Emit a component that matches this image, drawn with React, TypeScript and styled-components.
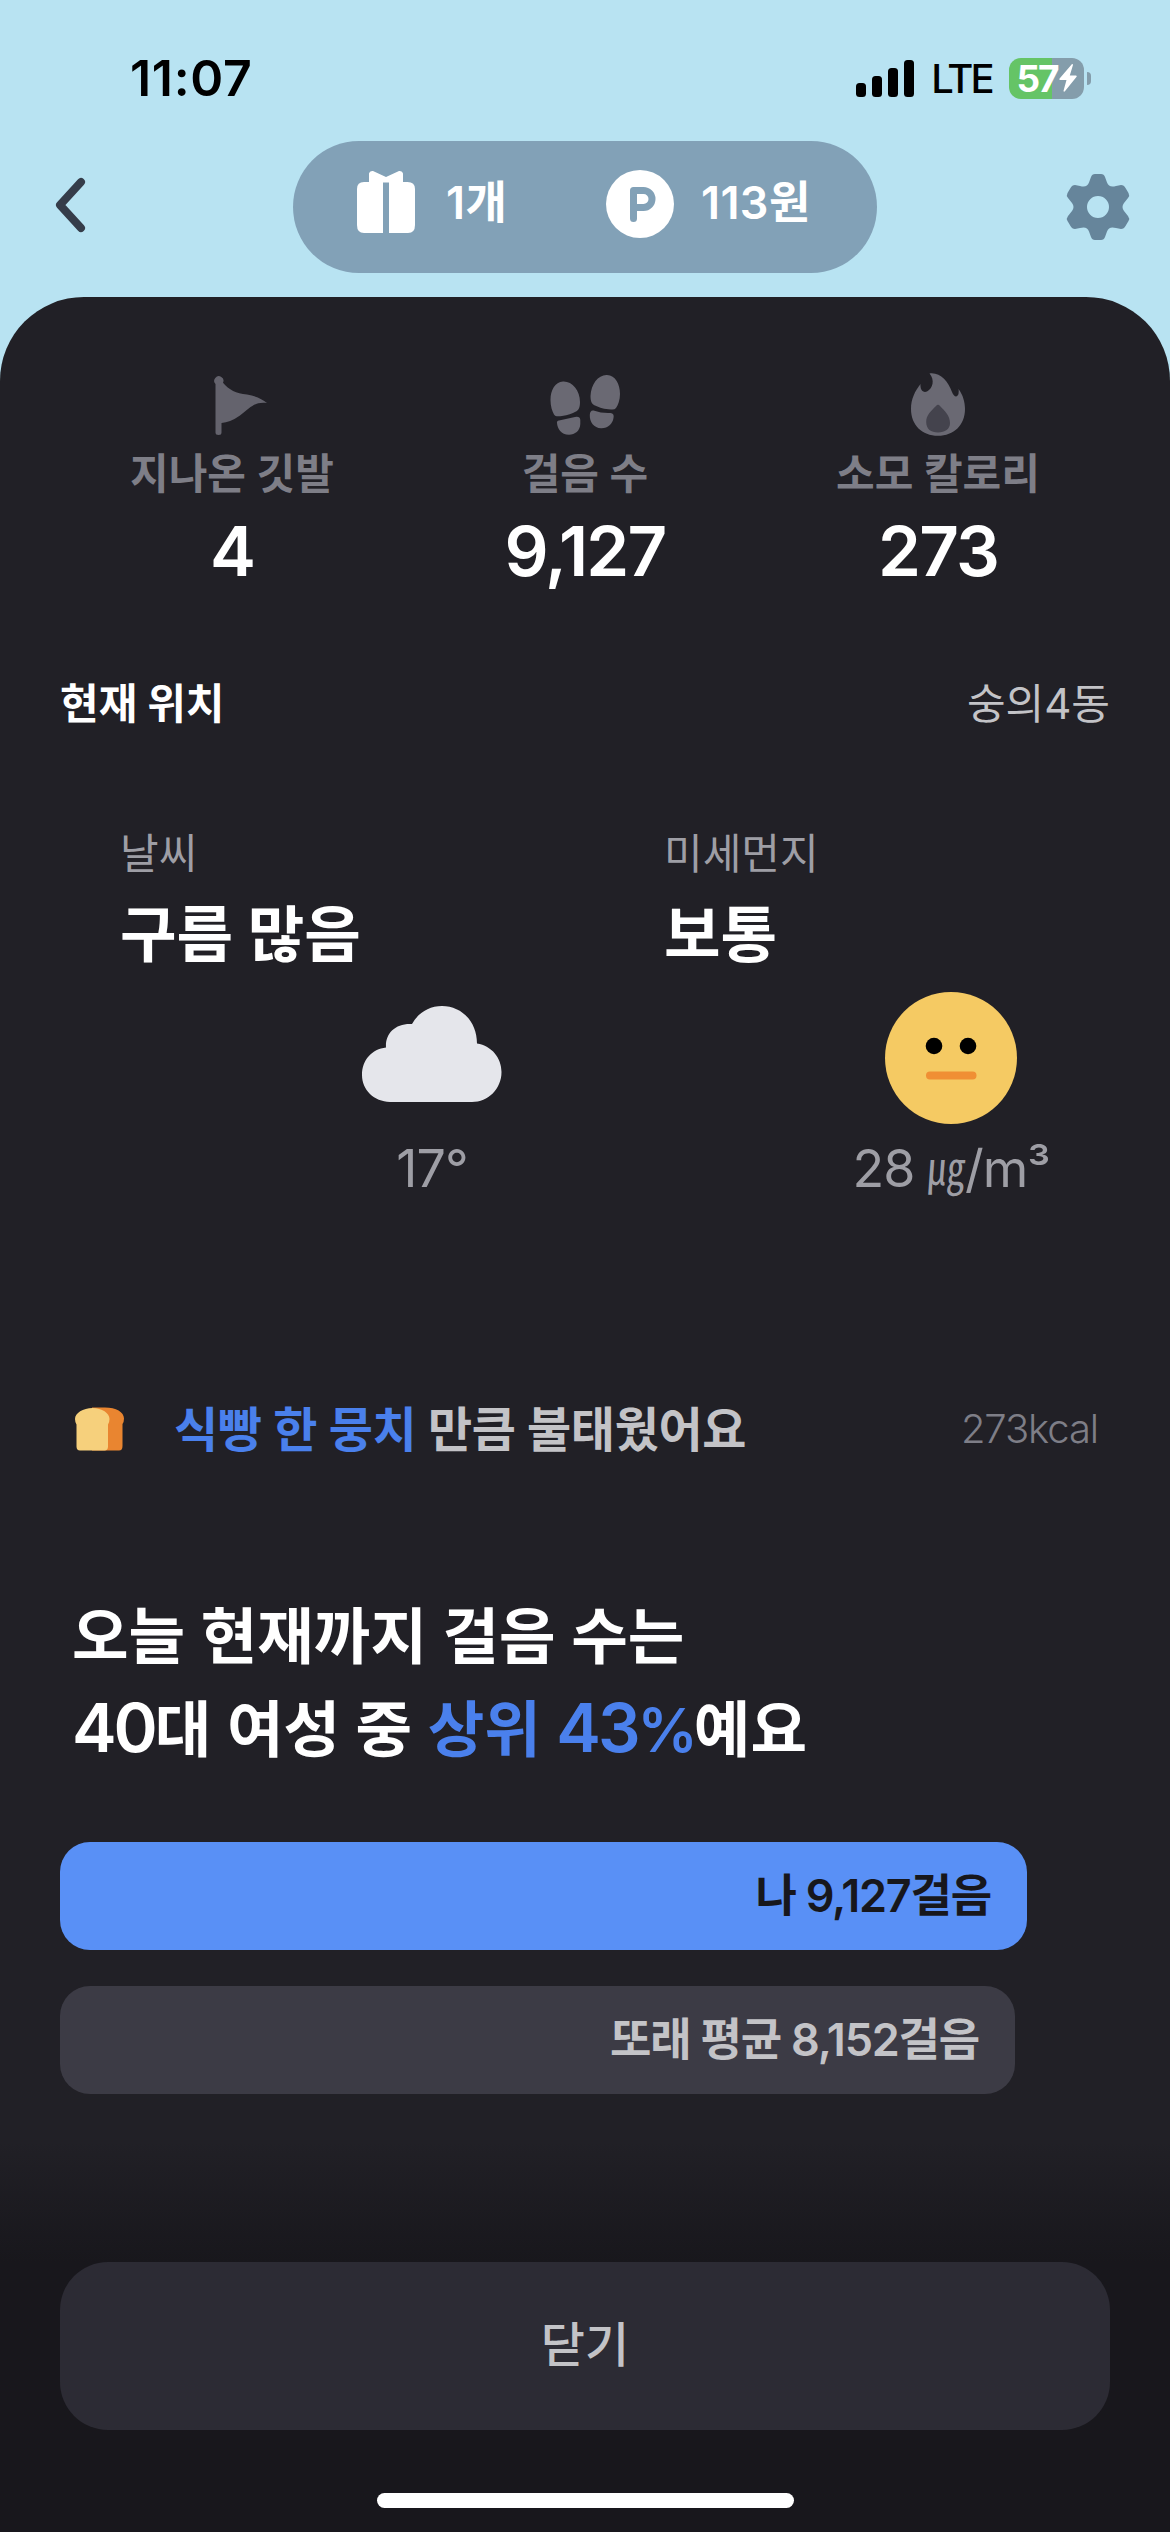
import React from 'react';
import styled, { createGlobalStyle } from 'styled-components';

const GlobalStyle = createGlobalStyle`
  *, *::before, *::after { box-sizing: border-box; }
  body {
    margin: 0;
    background: #b8e3f2;
    font-family: Inter, "Noto Sans CJK KR", sans-serif;
    -webkit-font-smoothing: antialiased;
  }
  svg { display: block; flex: none; }
`;

const Screen = styled.div`
  width: 1170px;
  height: 2532px;
  display: flex;
  flex-direction: column;
  background: #b8e3f2;
  overflow: hidden;
`;

const StatusBar = styled.header`
  height: 141px;
  flex: none;
  display: flex;
  align-items: flex-start;
  justify-content: space-between;
  padding: 48px 79px 0 130px;
`;

const Clock = styled.time`
  font-size: 50px;
  line-height: 60px;
  font-weight: 600;
  letter-spacing: 0.7px;
  color: #000;
`;

const StatusRight = styled.div`
  display: flex;
  align-items: center;
  height: 60px;
`;

const Network = styled.span`
  width: 95px;
  margin-top: 2px;
  text-align: center;
  font-size: 40px;
  line-height: 48px;
  font-weight: 500;
  letter-spacing: -2.8px;
  color: #000;
`;

const Battery = styled.div`
  width: 75px;
  height: 41px;
  border-radius: 12px;
  display: flex;
  align-items: center;
  justify-content: center;
  gap: 1px;
  background: linear-gradient(90deg, #65c466 0 43px, #849dab 43px);
`;

const BatteryLevel = styled.span`
  font-size: 37px;
  line-height: 41px;
  font-weight: 700;
  letter-spacing: -2px;
  color: #fff;
`;

const BatteryCap = styled.div`
  width: 4px;
  height: 13px;
  margin-left: 3px;
  border-radius: 0 4px 4px 0;
  background: #849dab;
`;

const NavBar = styled.nav`
  height: 156px;
  flex: none;
  display: flex;
  align-items: flex-start;
  padding: 0 40px 0 54px;
`;

const IconButton = styled.button<{ $lift?: number }>`
  width: 64px;
  height: 132px;
  padding: 0 0 ${(p) => p.$lift ?? 0}px;
  border: 0;
  background: none;
  display: flex;
  align-items: center;
`;

const Rewards = styled.div`
  width: 584px;
  height: 132px;
  margin: 0 auto 0 175px;
  border-radius: 66px;
  background: #82a1b7;
  display: flex;
  align-items: flex-start;
  padding: 29px 0 0 64px;
`;

const Reward = styled.div<{ $gap: number; $width: number }>`
  display: flex;
  align-items: flex-start;
  gap: ${(p) => p.$gap}px;
  width: ${(p) => p.$width}px;
  color: #fff;
  font-size: 45px;
  line-height: 65px;
  font-weight: 600;
  letter-spacing: 0.4px;
  white-space: nowrap;
`;

const Panel = styled.main`
  flex: 1;
  display: flex;
  flex-direction: column;
  background: #212026;
  border-radius: 84px 84px 0 0;
`;

const Stats = styled.section`
  display: grid;
  grid-template-columns: repeat(3, 353px);
  justify-content: center;
  padding-top: 72px;
  height: 357px;
`;

const Stat = styled.div`
  display: flex;
  flex-direction: column;
  align-items: center;
`;

const StatLabel = styled.div`
  margin-top: 3px;
  font-size: 42px;
  line-height: 60px;
  font-weight: 600;
  color: #7e7e87;
`;

const StatValue = styled.div`
  margin-top: 5px;
  font-size: 69px;
  line-height: 84px;
  font-weight: 600;
  letter-spacing: -1.8px;
  color: #fff;
`;

const LocationRow = styled.section`
  display: flex;
  justify-content: space-between;
  align-items: center;
  height: 100px;
  padding: 0 60px;
`;

const LocationTitle = styled.h2`
  margin: 0;
  font-size: 42px;
  line-height: 60px;
  font-weight: 700;
  color: #fff;
`;

const LocationName = styled.span`
  font-size: 42px;
  line-height: 60px;
  font-weight: 400;
  color: #c3c3c7;
`;

const Air = styled.section`
  display: grid;
  grid-template-columns: 544px 1fr;
  padding: 70px 0 0 120px;
  height: 626px;
`;

const AirCard = styled.div`
  display: flex;
  flex-direction: column;
`;

const AirLabel = styled.div`
  font-size: 42px;
  line-height: 60px;
  color: #9e9ea5;
`;

const AirValue = styled.div`
  margin-top: 9px;
  font-size: 61.5px;
  line-height: 84px;
  font-weight: 700;
  color: #fff;
`;

const AirFigure = styled.div<{ $center: number }>`
  width: 240px;
  margin: 14px 0 0 ${(p) => p.$center - 120}px;
  display: flex;
  flex-direction: column;
  align-items: center;
`;

const AirReading = styled.div`
  margin-top: 12px;
  font-size: 52px;
  line-height: 64px;
  color: #9e9ea5;
  white-space: nowrap;
  letter-spacing: -1px;
`;

const Microgram = styled.span`
  display: inline-block;
  margin: 0 -4px;
  font-size: 46px;
  line-height: 1;
  transform: translateY(-2px) scaleX(0.82) skewX(-5deg);
`;

const BurnRow = styled.section`
  display: flex;
  align-items: center;
  height: 100px;
  padding: 0 72px 2px 75px;
`;

const BurnText = styled.p`
  flex: 1;
  margin: 2px 0 0 50px;
  font-size: 48px;
  line-height: 72px;
  font-weight: 600;
  letter-spacing: -0.4px;
  color: #c3c3c7;
`;

const Accent = styled.span`
  color: #4a80ec;
`;

const BurnKcal = styled.span`
  font-size: 40px;
  line-height: 60px;
  font-weight: 350;
  letter-spacing: -1.1px;
  color: #7e7e87;
`;

const Headline = styled.h1`
  margin: 110px 0 0 72px;
  font-size: 61.5px;
  line-height: 93px;
  font-weight: 600;
  color: #fff;
`;

const Figure = styled.span`
  font-size: 67px;
  line-height: 1;
  letter-spacing: -3px;
`;

const Percent = styled.span`
  font-size: 60px;
  line-height: 1;
  letter-spacing: -4px;
`;

const Bars = styled.section`
  display: flex;
  flex-direction: column;
  gap: 36px;
  margin: 66px 0 0 60px;
`;

const Bar = styled.div<{ $tone: 'me' | 'peers' }>`
  height: 108px;
  padding: 0 36px 8px 0;
  border-radius: 30px;
  display: flex;
  align-items: center;
  justify-content: flex-end;
  font-size: 45px;
  font-weight: 600;
  letter-spacing: -1.2px;
  background: ${(p) => (p.$tone === 'me' ? '#5990f6' : '#3c3b45')};
  color: ${(p) => (p.$tone === 'me' ? '#17171c' : '#c3c3c7')};
`;

const Footer = styled.footer`
  margin-top: auto;
  height: 390px;
  display: flex;
  flex-direction: column;
  align-items: center;
  padding: 120px 60px 0;
  background: linear-gradient(180deg, #212026 0, #18171c 120px);
`;

const CloseButton = styled.button`
  width: 100%;
  height: 168px;
  flex: none;
  padding: 0 0 2px;
  border: 0;
  border-radius: 48px;
  background: #2c2b34;
  color: #c3c3c7;
  font: 500 48px/72px Inter, "Noto Sans CJK KR", sans-serif;
`;

const HomeIndicator = styled.div`
  width: 417px;
  height: 15px;
  margin-top: 63px;
  border-radius: 8px;
  background: #fff;
`;

const SignalIcon = () => (
  <svg width="58" height="37" viewBox="0 0 58 37">
    <rect x="0" y="23" width="10" height="14" rx="3.5" />
    <rect x="16" y="16" width="10" height="21" rx="3.5" />
    <rect x="32" y="8" width="10" height="29" rx="3.5" />
    <rect x="48" y="0" width="10" height="37" rx="3.5" />
  </svg>
);

const BoltIcon = () => (
  <svg width="18" height="28" viewBox="0 0 18 28" fill="#fff">
    <path d="M12.6.5 0.6 14.4c-.6.8-.3 1.5.6 1.5h6.3L4.6 26.6c-.3 1.1.6 1.5 1.3.7L17.4 13c.6-.8.3-1.5-.6-1.5h-6L13.9 1.2C14.2.2 13.3-.3 12.6.5z" />
  </svg>
);

const BackIcon = () => (
  <svg width="32" height="56" viewBox="0 0 32 56" fill="none" stroke="#353d4a" strokeWidth="8" strokeLinecap="round" strokeLinejoin="round">
    <path d="M27 5 6 28l21 23" />
  </svg>
);

const GiftIcon = () => (
  <svg width="58" height="64" viewBox="0 0 58 64" fill="#fff">
    <path d="M12 12V3.500Q12.500.500 16 1l13 6 13-6q3.500-.5 4 2.500V12h4.500Q58 12 58 19v36q0 8-7 8H32V12.500h-6V63H7q-7 0-7-8V19q0-7 7-7h5z" />
  </svg>
);

const PointIcon = () => (
  <svg width="68" height="68" viewBox="0 0 68 68">
    <circle cx="34" cy="34" r="34" fill="#fff" />
    <path d="M27.500 48.500V20.500H37.500a8.500 8.500 0 0 1 0 17H27.500" fill="none" stroke="#82a1b7" strokeWidth="7" strokeLinecap="round" strokeLinejoin="round" />
  </svg>
);

const GearIcon = () => (
  <svg width="64" height="68" viewBox="-32 -34 64 68" fill="#66859b">
    <path
      fillRule="evenodd"
      d="M-3-33H3Q6-33 7-30L9-24.500Q10.500-20.500 14.500-20.500Q16-20.500 18-21L23-22Q26-22 27.500-19L30.500-14Q32-11.500 30-9L26-4Q24.500-2 24.500 0Q24.500 2 26 4L30 9Q32 11.500 30.500 14L27.500 19Q26 22 23 22L18 21Q16 20.500 14.500 20.500Q10.500 20.500 9 24.500L7 30Q6 33 3 33H-3Q-6 33-7 30L-9 24.500Q-10.500 20.500-14.500 20.500Q-16 20.500-18 21L-23 22Q-26 22-27.500 19L-30.500 14Q-32 11.500-30 9L-26 4Q-24.500 2-24.500 0Q-24.500-2-26-4L-30-9Q-32-11.500-30.500-14L-27.500-19Q-26-22-23-22L-18-21Q-16-20.500-14.500-20.500Q-10.500-20.500-9-24.500L-7-30Q-6-33-3-33ZM0-11a11 11 0 1 0 0 22a11 11 0 1 0 0-22Z"
    />
  </svg>
);

const FlagIcon = () => (
  <svg width="72" height="72" viewBox="196 369 72 72" fill="#64636d">
    <path d="M215.500 384a4.600 4.600 0 1 1 7.500-1.200C229 390 236 393.500 247 394.500C256 396 262 399 267 403C255 401.500 251 407 240 415.500Q230 422.500 221.500 423V432.500Q221.500 435 218.700 435Q215.500 435 215.500 432.500Z" />
  </svg>
);

const StepsIcon = () => (
  <svg width="72" height="72" viewBox="549 369 72 72" fill="#6a6973">
    <path d="M563 381.500C555 382 550.500 390 550.500 400C550.500 406 552 411 554 414.500C555 416.500 558 416.500 562 416C568 415 572 413.500 576 411.500C578.500 410 580 408 580 402C580 390 572 381 563 381.500Z" />
    <path d="M559 420.500L575 417Q580 416 580.300 420V424C580 431 575 434.500 569 434.800C561 434.500 557.500 429 557 423Q556.500 421 559 420.500Z" />
    <path d="M607 375C615.500 375.500 620 384 620 394C620 400 618 405 616 408Q614.500 410 611 409.500C604 409 600 408 595 405.500C592 404 590.500 402 590.500 396C591 384 598.500 374.500 607 375Z" />
    <path d="M593.500 410.500Q602 413.500 610.500 413Q614.500 413.500 613.500 418C612.500 424 608 428.500 601 428.300C594 428 589.500 422 589.800 415Q590 410 593.500 410.500Z" />
  </svg>
);

const FlameIcon = () => (
  <svg width="72" height="72" viewBox="903 369 72 72">
    <path d="M930.500 373.500C941 372 949 381 953 392C955 397 958 398 959.500 394Q960 391 959.500 389C964 395 966 402 966 409C966 425 955 435.800 939 435.800C923 435.800 912 425 912 409C912 399 916 391 921.500 384C921 390 924 393 928 391.500C934 388 936 380 930.500 373.500Z" fill="#6a6973" />
    <path d="M937 406Q939 403.500 941 406C946 411 951 416 951 423C951 429 946 432.500 939 432.500C932 432.500 927.200 429 927.200 422C927.200 415 932 411 937 406Z" fill="#44434d" />
  </svg>
);

const CloudIcon = () => (
  <svg width="140" height="134" viewBox="0 -15 140 134" fill="#e5e6eb">
    <path d="M28 96C12 95.500 0 84 0 69C0 54 10 43 24 41.500C23 28 33 17 50 18C56 7 67 0 80 0C99 0 115 15 115 37.500C130 40 139.500 52 139.500 66C139.500 83 126 96 110 96Z" />
  </svg>
);

const FaceIcon = () => (
  <svg width="134" height="134" viewBox="-67 -67 134 134">
    <circle r="66" fill="#f5ca63" />
    <circle cx="-17" cy="-12" r="8.300" />
    <circle cx="17" cy="-12" r="8.300" />
    <rect x="-25" y="13.500" width="50.500" height="8" rx="4" fill="#f08f34" />
  </svg>
);

const BreadIcon = () => (
  <svg width="49" height="44" viewBox="0 0 49 44">
    <path d="M17 0.500H30C41 0.500 49 5 49 11.500Q49 15 47.500 17V39Q47.500 43.500 44 43.500H17Z" fill="#e98530" />
    <path d="M17.500 1C27 1 34.500 6 34.500 12Q34.500 15 33 17.500V39.500Q33 43.500 29.500 43.500H5Q1.500 43.500 1.500 39.500V17.500Q0 15 0 12C0 6 8 1 17.500 1Z" fill="#f6d07c" />
  </svg>
);

const stats = [
  { icon: <FlagIcon />, label: '지나온 깃발', value: '4' },
  { icon: <StepsIcon />, label: '걸음 수', value: '9,127' },
  { icon: <FlameIcon />, label: '소모 칼로리', value: '273' },
];

const bars = [
  { tone: 'me' as const, width: 967, text: '나 9,127걸음' },
  { tone: 'peers' as const, width: 955, text: '또래 평균 8,152걸음' },
];

export default function App() {
  return (
    <>
      <GlobalStyle />
      <Screen>
        <StatusBar>
          <Clock>11:07</Clock>
          <StatusRight>
            <SignalIcon />
            <Network>LTE</Network>
            <Battery>
              <BatteryLevel>57</BatteryLevel>
              <BoltIcon />
            </Battery>
            <BatteryCap />
          </StatusRight>
        </StatusBar>
        <NavBar>
          <IconButton aria-label="뒤로" $lift={4}>
            <BackIcon />
          </IconButton>
          <Rewards>
            <Reward $gap={31} $width={249}>
              <GiftIcon />
              <span>1개</span>
            </Reward>
            <Reward $gap={27} $width={240}>
              <PointIcon />
              <span>113원</span>
            </Reward>
          </Rewards>
          <IconButton aria-label="설정">
            <GearIcon />
          </IconButton>
        </NavBar>
        <Panel>
          <Stats>
            {stats.map((s) => (
              <Stat key={s.label}>
                {s.icon}
                <StatLabel>{s.label}</StatLabel>
                <StatValue>{s.value}</StatValue>
              </Stat>
            ))}
          </Stats>
          <LocationRow>
            <LocationTitle>현재 위치</LocationTitle>
            <LocationName>숭의4동</LocationName>
          </LocationRow>
          <Air>
            <AirCard>
              <AirLabel>날씨</AirLabel>
              <AirValue>구름 많음</AirValue>
              <AirFigure $center={312}>
                <CloudIcon />
                <AirReading>17°</AirReading>
              </AirFigure>
            </AirCard>
            <AirCard>
              <AirLabel>미세먼지</AirLabel>
              <AirValue>보통</AirValue>
              <AirFigure $center={287}>
                <FaceIcon />
                <AirReading>
                  28 <Microgram>㎍</Microgram>/m³
                </AirReading>
              </AirFigure>
            </AirCard>
          </Air>
          <BurnRow>
            <BreadIcon />
            <BurnText>
              <Accent>식빵 한 뭉치</Accent> 만큼 불태웠어요
            </BurnText>
            <BurnKcal>273kcal</BurnKcal>
          </BurnRow>
          <Headline>
            오늘 현재까지 걸음 수는
            <br />
            <Figure>40</Figure>대 여성 중{' '}
            <Accent>
              상위 <Figure>43</Figure>
              <Percent>%</Percent>
            </Accent>
            예요
          </Headline>
          <Bars>
            {bars.map((b) => (
              <Bar key={b.tone} $tone={b.tone} style={{ width: b.width }}>
                {b.text}
              </Bar>
            ))}
          </Bars>
          <Footer>
            <CloseButton>닫기</CloseButton>
            <HomeIndicator />
          </Footer>
        </Panel>
      </Screen>
    </>
  );
}
